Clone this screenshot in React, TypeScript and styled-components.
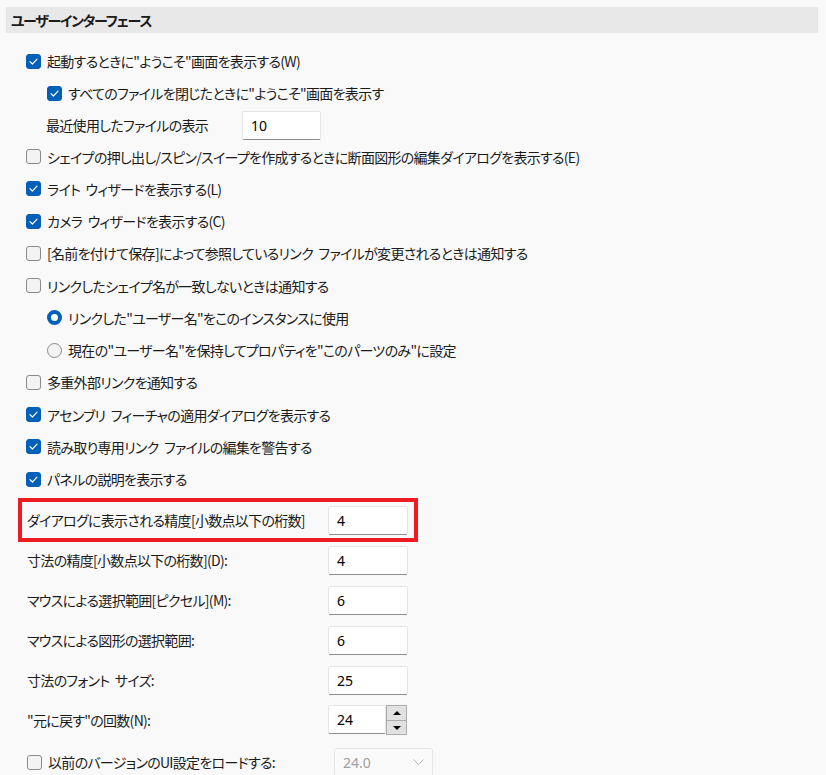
import { FC, ReactElement, ReactNode } from "react";
import styled, { createGlobalStyle } from "styled-components";

const GlobalStyle = createGlobalStyle`
    html, body
    {
        margin: 0;
        padding: 0;
        background: #f9f9f9;
    }
    body
    {
        font-family: "Noto Sans CJK JP", "Noto Sans", "Liberation Sans", sans-serif;
        font-size: 14px;
        font-feature-settings: "palt" 1;
        letter-spacing: -0.7px;
        word-spacing: 3px;
        color: #1b1b1b;
    }
`;

const Page = styled.div`
    padding: 7px 8px 0 6px;
    width: 826px;
    height: 775px;
    box-sizing: border-box;
    overflow: hidden;
`;

const SectionHeader = styled.div`
    height: 26px;
    line-height: 26px;
    background: #e8e8e8;
    padding-left: 5px;
    font-weight: 700;
    font-size: 14px;
    letter-spacing: -1.3px;
`;

const List = styled.div`
    padding: 12px 0 0 20px;
    display: flex;
    flex-direction: column;
`;

const Row = styled.div<{ $indent?: number }>`
    height: 32.25px;
    display: flex;
    align-items: center;
    gap: 6px;
    padding-left: ${(p) => (p.$indent ?? 0) * 21}px;
    white-space: nowrap;
`;

const Box = styled.span<{ $checked?: boolean }>`
    width: 15px;
    height: 15px;
    box-sizing: border-box;
    border-radius: 3px;
    flex: none;
    display: inline-flex;
    align-items: center;
    justify-content: center;
    background: ${(p) => (p.$checked ? "#005fb8" : "#f3f3f3")};
    border: 1px solid ${(p) => (p.$checked ? "#005fb8" : "#8a8a8a")};
`;

const Radio = styled.span<{ $checked?: boolean }>`
    width: 15px;
    height: 15px;
    box-sizing: border-box;
    border-radius: 50%;
    flex: none;
    background: ${(p) => (p.$checked ? "#ffffff" : "#f3f3f3")};
    border: ${(p) => (p.$checked ? "4px solid #005fb8" : "1px solid #8a8a8a")};
`;

const Label = styled.span`
    line-height: 1;
`;

const TextInput = styled.div<{ $width?: number }>`
    width: ${(p) => p.$width ?? 80}px;
    height: 29px;
    box-sizing: border-box;
    background: #ffffff;
    border: 1px solid #e5e5e5;
    border-bottom: 1px solid #8d8d8d;
    border-radius: 2px;
    padding: 0 0 0 8px;
    display: flex;
    align-items: center;
    font-family: "Noto Sans", "Liberation Sans", sans-serif;
    font-size: 14px;
    letter-spacing: 0;
    color: #000;
`;

const InlineField = styled.div`
    display: grid;
    grid-template-columns: 196px auto;
    align-items: center;
    padding-left: 20px;
    height: 31px;
`;

const FieldRow = styled.div`
    display: grid;
    grid-template-columns: 301px auto;
    align-items: center;
    height: 40px;
    padding-left: 1px;
    white-space: nowrap;
`;

const HighlightRow = styled(FieldRow)`
    width: 400px;
    height: 44px;
    box-sizing: border-box;
    border: 4px solid #ed1c24;
    margin: 3px 0 -2px -8px;
    padding-left: 5px;
`;

const Spin = styled.div`
    display: flex;
    align-items: stretch;
    height: 30px;
`;

const SpinButtons = styled.div`
    width: 21px;
    display: flex;
    flex-direction: column;
    border: 1px solid #adadad;
    box-sizing: border-box;
    background: #adadad;
    gap: 1px;
`;

const SpinButton = styled.div`
    flex: 1;
    background: #e1e1e1;
    display: flex;
    align-items: center;
    justify-content: center;
`;

const Arrow = styled.span<{ $up?: boolean }>`
    width: 0;
    height: 0;
    border-left: 4px solid transparent;
    border-right: 4px solid transparent;
    ${(p) => (p.$up ? "border-bottom: 4px solid #000;" : "border-top: 4px solid #000;")}
`;

const LegacyRow = styled.div`
    display: flex;
    align-items: center;
    gap: 6px;
    height: 40px;
    margin-top: 2px;
    padding-left: 1px;
    white-space: nowrap;
`;

const LegacyLabel = styled(Label)`
    width: 280px;
`;

const Select = styled.div`
    width: 99px;
    height: 29px;
    box-sizing: border-box;
    border: 1px solid #e5e5e5;
    border-radius: 3px;
    background: #fafafa;
    display: flex;
    align-items: center;
    justify-content: space-between;
    padding: 0 8px;
    font-family: "Noto Sans", "Liberation Sans", sans-serif;
    font-size: 14px;
    letter-spacing: 0;
    color: #a0a0a0;
`;

const Check: FC<{ checked?: boolean }> = ({ checked }): ReactElement => (
    <Box $checked={checked}>
        {checked && (
            <svg width="9" height="7" viewBox="0 0 9 7">
                <path d="M1 3.6 L3.4 6 L8 1.2" fill="none" stroke="#fff" strokeWidth="1.2" strokeLinecap="round" strokeLinejoin="round" />
            </svg>
        )}
    </Box>
);

const CheckRow: FC<{ checked?: boolean; indent?: number; children: ReactNode }> = ({ checked, indent, children }): ReactElement => (
    <Row $indent={indent}>
        <Check checked={checked} />
        <Label>{children}</Label>
    </Row>
);

const RadioRow: FC<{ checked?: boolean; children: ReactNode }> = ({ checked, children }): ReactElement => (
    <Row $indent={1}>
        <Radio $checked={checked} />
        <Label>{children}</Label>
    </Row>
);

const App: FC = (): ReactElement => {
    return (
        <>
            <GlobalStyle />
            <Page>
                <SectionHeader>ユーザーインターフェース</SectionHeader>
                <List>
                    <CheckRow checked>起動するときに"ようこそ"画面を表示する(W)</CheckRow>
                    <CheckRow checked indent={1}>すべてのファイルを閉じたときに"ようこそ"画面を表示す</CheckRow>
                    <InlineField>
                        <Label>最近使用したファイルの表示</Label>
                        <TextInput $width={79}>10</TextInput>
                    </InlineField>
                    <CheckRow>シェイプの押し出し/スピン/スイープを作成するときに断面図形の編集ダイアログを表示する(E)</CheckRow>
                    <CheckRow checked>ライト ウィザードを表示する(L)</CheckRow>
                    <CheckRow checked>カメラ ウィザードを表示する(C)</CheckRow>
                    <CheckRow>[名前を付けて保存]によって参照しているリンク ファイルが変更されるときは通知する</CheckRow>
                    <CheckRow>リンクしたシェイプ名が一致しないときは通知する</CheckRow>
                    <RadioRow checked>リンクした"ユーザー名"をこのインスタンスに使用</RadioRow>
                    <RadioRow>現在の"ユーザー名"を保持してプロパティを"このパーツのみ"に設定</RadioRow>
                    <CheckRow>多重外部リンクを通知する</CheckRow>
                    <CheckRow checked>アセンブリ フィーチャの適用ダイアログを表示する</CheckRow>
                    <CheckRow checked>読み取り専用リンク ファイルの編集を警告する</CheckRow>
                    <CheckRow checked>パネルの説明を表示する</CheckRow>

                    <HighlightRow>
                        <Label>ダイアログに表示される精度[小数点以下の桁数]</Label>
                        <TextInput>4</TextInput>
                    </HighlightRow>
                    <FieldRow>
                        <Label>寸法の精度[小数点以下の桁数](D):</Label>
                        <TextInput>4</TextInput>
                    </FieldRow>
                    <FieldRow>
                        <Label>マウスによる選択範囲[ピクセル](M):</Label>
                        <TextInput>6</TextInput>
                    </FieldRow>
                    <FieldRow>
                        <Label>マウスによる図形の選択範囲:</Label>
                        <TextInput>6</TextInput>
                    </FieldRow>
                    <FieldRow>
                        <Label>寸法のフォント サイズ:</Label>
                        <TextInput>25</TextInput>
                    </FieldRow>
                    <FieldRow>
                        <Label>"元に戻す"の回数(N):</Label>
                        <Spin>
                            <TextInput $width={58}>24</TextInput>
                            <SpinButtons>
                                <SpinButton><Arrow $up /></SpinButton>
                                <SpinButton><Arrow /></SpinButton>
                            </SpinButtons>
                        </Spin>
                    </FieldRow>
                    <LegacyRow>
                        <Check />
                        <LegacyLabel>以前のバージョンのUI設定をロードする:</LegacyLabel>
                        <Select>
                            <span>24.0</span>
                            <svg width="11" height="6" viewBox="0 0 11 6">
                                <path d="M0.5 0.5 L5.5 5.5 L10.5 0.5" fill="none" stroke="#b5b5b5" strokeWidth="1" />
                            </svg>
                        </Select>
                    </LegacyRow>
                </List>
            </Page>
        </>
    );
};

export default App;
